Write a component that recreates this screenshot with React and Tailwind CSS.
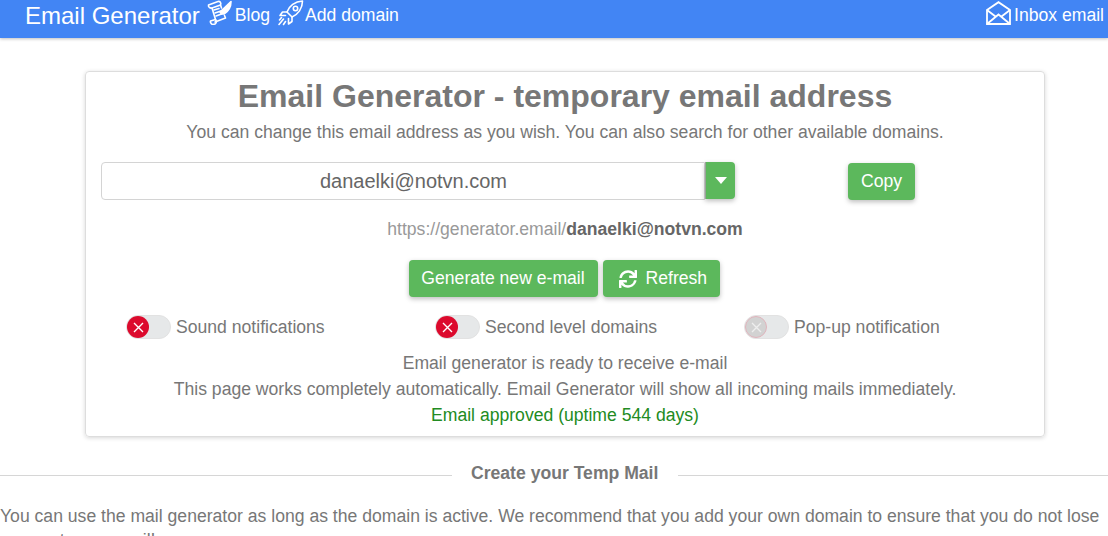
import React from "react";
import { FaSync } from "react-icons/fa";

function BlogIcon() {
  return (
    <svg width="25" height="25" viewBox="0 0 25 25" fill="none" stroke="#fff" strokeWidth="1.6" strokeLinejoin="round" strokeLinecap="round">
      <path d="M1.5 5 L11 1.5 C13 1 14.5 3 13.5 5 L5 8 C3 8.5 1 7 1.5 5Z" />
      <path d="M5 8 L8.5 19.5" />
      <path d="M13.5 5 L14.5 8 M17.5 15.5 L18.5 18 L8 22" />
      <path d="M3.5 21 L8.5 19.5 C9.5 21 9.5 23 8 24 L6 24.5 C4.5 24.5 3 22.5 3.5 21Z" />
      <path d="M7 10 L12 8.5 M8 13 L14 11 M9 16 L14.5 14" />
      <path d="M13 12 L24 1.5 C24 6 22 11 17 14 L14.5 14 Z" fill="#fff" />
    </svg>
  );
}

function RocketIcon() {
  return (
    <svg width="26" height="26" viewBox="0 0 26 26" fill="none" stroke="#fff" strokeWidth="1.6" strokeLinejoin="round" strokeLinecap="round">
      <path d="M9 12 C11 6 17 1.5 24.5 1 C24.5 8.5 20 14.5 14 17 Z" />
      <circle cx="17.5" cy="8.5" r="2.2" />
      <path d="M9 12 L4.5 12 L2 15.5 L7.5 15.5" />
      <path d="M14 17 L14 21.5 L10.5 24 L10.5 18.5" />
      <path d="M5.5 19 L1 24.5 M7.5 21.5 L5.5 24.5 M3.5 17.5 L1.5 20" />
    </svg>
  );
}

function MailOpenIcon() {
  return (
    <svg width="25" height="24" viewBox="0 0 25 24" fill="none" stroke="#fff" strokeWidth="1.8" strokeLinejoin="miter">
      <path d="M1 9 L12.5 1.2 L24 9 V23 H1 Z" />
      <path d="M1 9 L9.5 15.5 M24 9 L15.5 15.5" />
      <path d="M1 23 L12.5 13.5 L24 23" />
    </svg>
  );
}

function Toggle({ label, faded, className }) {
  return (
    <div className={`flex items-center ${className || ""}`}>
      <div className="relative h-[24px] w-[45px] rounded-full border border-[#e2e2e2] bg-[#e6e8e9]">
        <div
          className={`absolute left-0 top-[0px] flex h-[22px] w-[22px] items-center justify-center rounded-full ${
            faded ? "bg-[#d2d2d2] border border-[#e0b4bc]" : "bg-[#dc0a2d]"
          }`}
        >
          <svg width="11" height="11" viewBox="0 0 11 11" stroke={faded ? "#eeeeee" : "#fff"} strokeWidth="1.4">
            <path d="M1 1 L10 10 M10 1 L1 10" />
          </svg>
        </div>
      </div>
      <span className="ml-[5px] text-[#777777]">{label}</span>
    </div>
  );
}

const green = "bg-[#5cb85c] text-white rounded-[4px] shadow-[0_2px_5px_rgba(0,0,0,0.26)] flex items-center justify-center";

export default function App() {
  return (
    <div className="h-[536px] overflow-hidden bg-white text-[17.6px] text-[#777777] font-['Liberation_Sans',Arial,sans-serif]">
      <nav className="flex h-[38px] items-center bg-[#4285f4] pb-[7px] text-white shadow-[0_1px_3px_rgba(0,0,0,0.25)]">
        <span className="ml-[25px] text-[24px] leading-[30px]">Email Generator</span>
        <span className="mb-[6px] ml-[7px]"><BlogIcon /></span>
        <span className="ml-[3px] text-[17.6px]">Blog</span>
        <span className="mb-[6px] ml-[8px]"><RocketIcon /></span>
        <span className="ml-[1px] text-[17.6px]">Add domain</span>
        <span className="mb-[6px] ml-auto"><MailOpenIcon /></span>
        <span className="ml-[3px] mr-[4px] text-[17.6px]">Inbox email</span>
      </nav>

      <main className="ml-[85px] mt-[33px] flex h-[366px] w-[960px] flex-col rounded-[4px] border border-[#dddddd] px-[15px] shadow-[0_1px_4px_rgba(0,0,0,0.16)]">
        <h1 className="mt-[4px] text-center text-[32px] font-bold leading-[40px] text-[#777777]">
          Email Generator - temporary email address
        </h1>
        <p className="mt-[4px] text-center leading-[24px]">
          You can change this email address as you wish. You can also search for other available domains.
        </p>
        <div className="mt-[18px] flex items-start">
          <div className="flex h-[38px] w-[604px] items-center justify-center rounded-l-[4px] border border-[#d4d4d4] pl-[21px] text-[20px] text-[#666666]">
            danaelki@notvn.com
          </div>
          <div className={`${green} h-[37px] w-[30px] rounded-l-none border-l border-l-[#9aa39a]`}>
            <div className="h-0 w-0 border-x-[6px] border-t-[7px] border-x-transparent border-t-white" />
          </div>
          <button className={`${green} ml-[113px] mt-[1px] h-[37px] w-[67px]`}>Copy</button>
        </div>
        <p className="mt-[17px] text-center leading-[24px] text-[#999999]">
          https://generator.email/<b className="text-[#666666]">danaelki@notvn.com</b>
        </p>
        <div className="mt-[19px] flex justify-center gap-[5px] pr-[2px]">
          <button className={`${green} h-[37px] w-[189px]`}>Generate new e-mail</button>
          <button className={`${green} h-[37px] w-[117px] !justify-start gap-[9px] pl-[16px]`}>
            <FaSync className="h-[18px] w-[18px]" />
            Refresh
          </button>
        </div>
        <div className="mt-[17px] flex">
          <Toggle label="Sound notifications" className="ml-[25px] w-[309px]" />
          <Toggle label="Second level domains" className="w-[309px]" />
          <Toggle label="Pop-up notification" faded />
        </div>
        <div className="mt-[10px] text-center leading-[26px]">
          <p>Email generator is ready to receive e-mail</p>
          <p>This page works completely automatically. Email Generator will show all incoming mails immediately.</p>
          <p className="text-[#228b22]">Email approved (uptime 544 days)</p>
        </div>
      </main>

      <div className="relative mt-[26px] flex h-[24px] items-center">
        <div className="h-px w-[452px] bg-[#d6d6d6]" />
        <span className="relative top-[-2px] ml-[19px] mr-[20px] font-bold leading-[24px] text-[#777777]">Create your Temp Mail</span>
        <div className="h-px flex-1 bg-[#d6d6d6]" />
      </div>
      <p className="mt-[17px] leading-[24px]">
        You can use the mail generator as long as the domain is active. We recommend that you add your own domain to ensure that you do not lose access to your mail!
      </p>
    </div>
  );
}
